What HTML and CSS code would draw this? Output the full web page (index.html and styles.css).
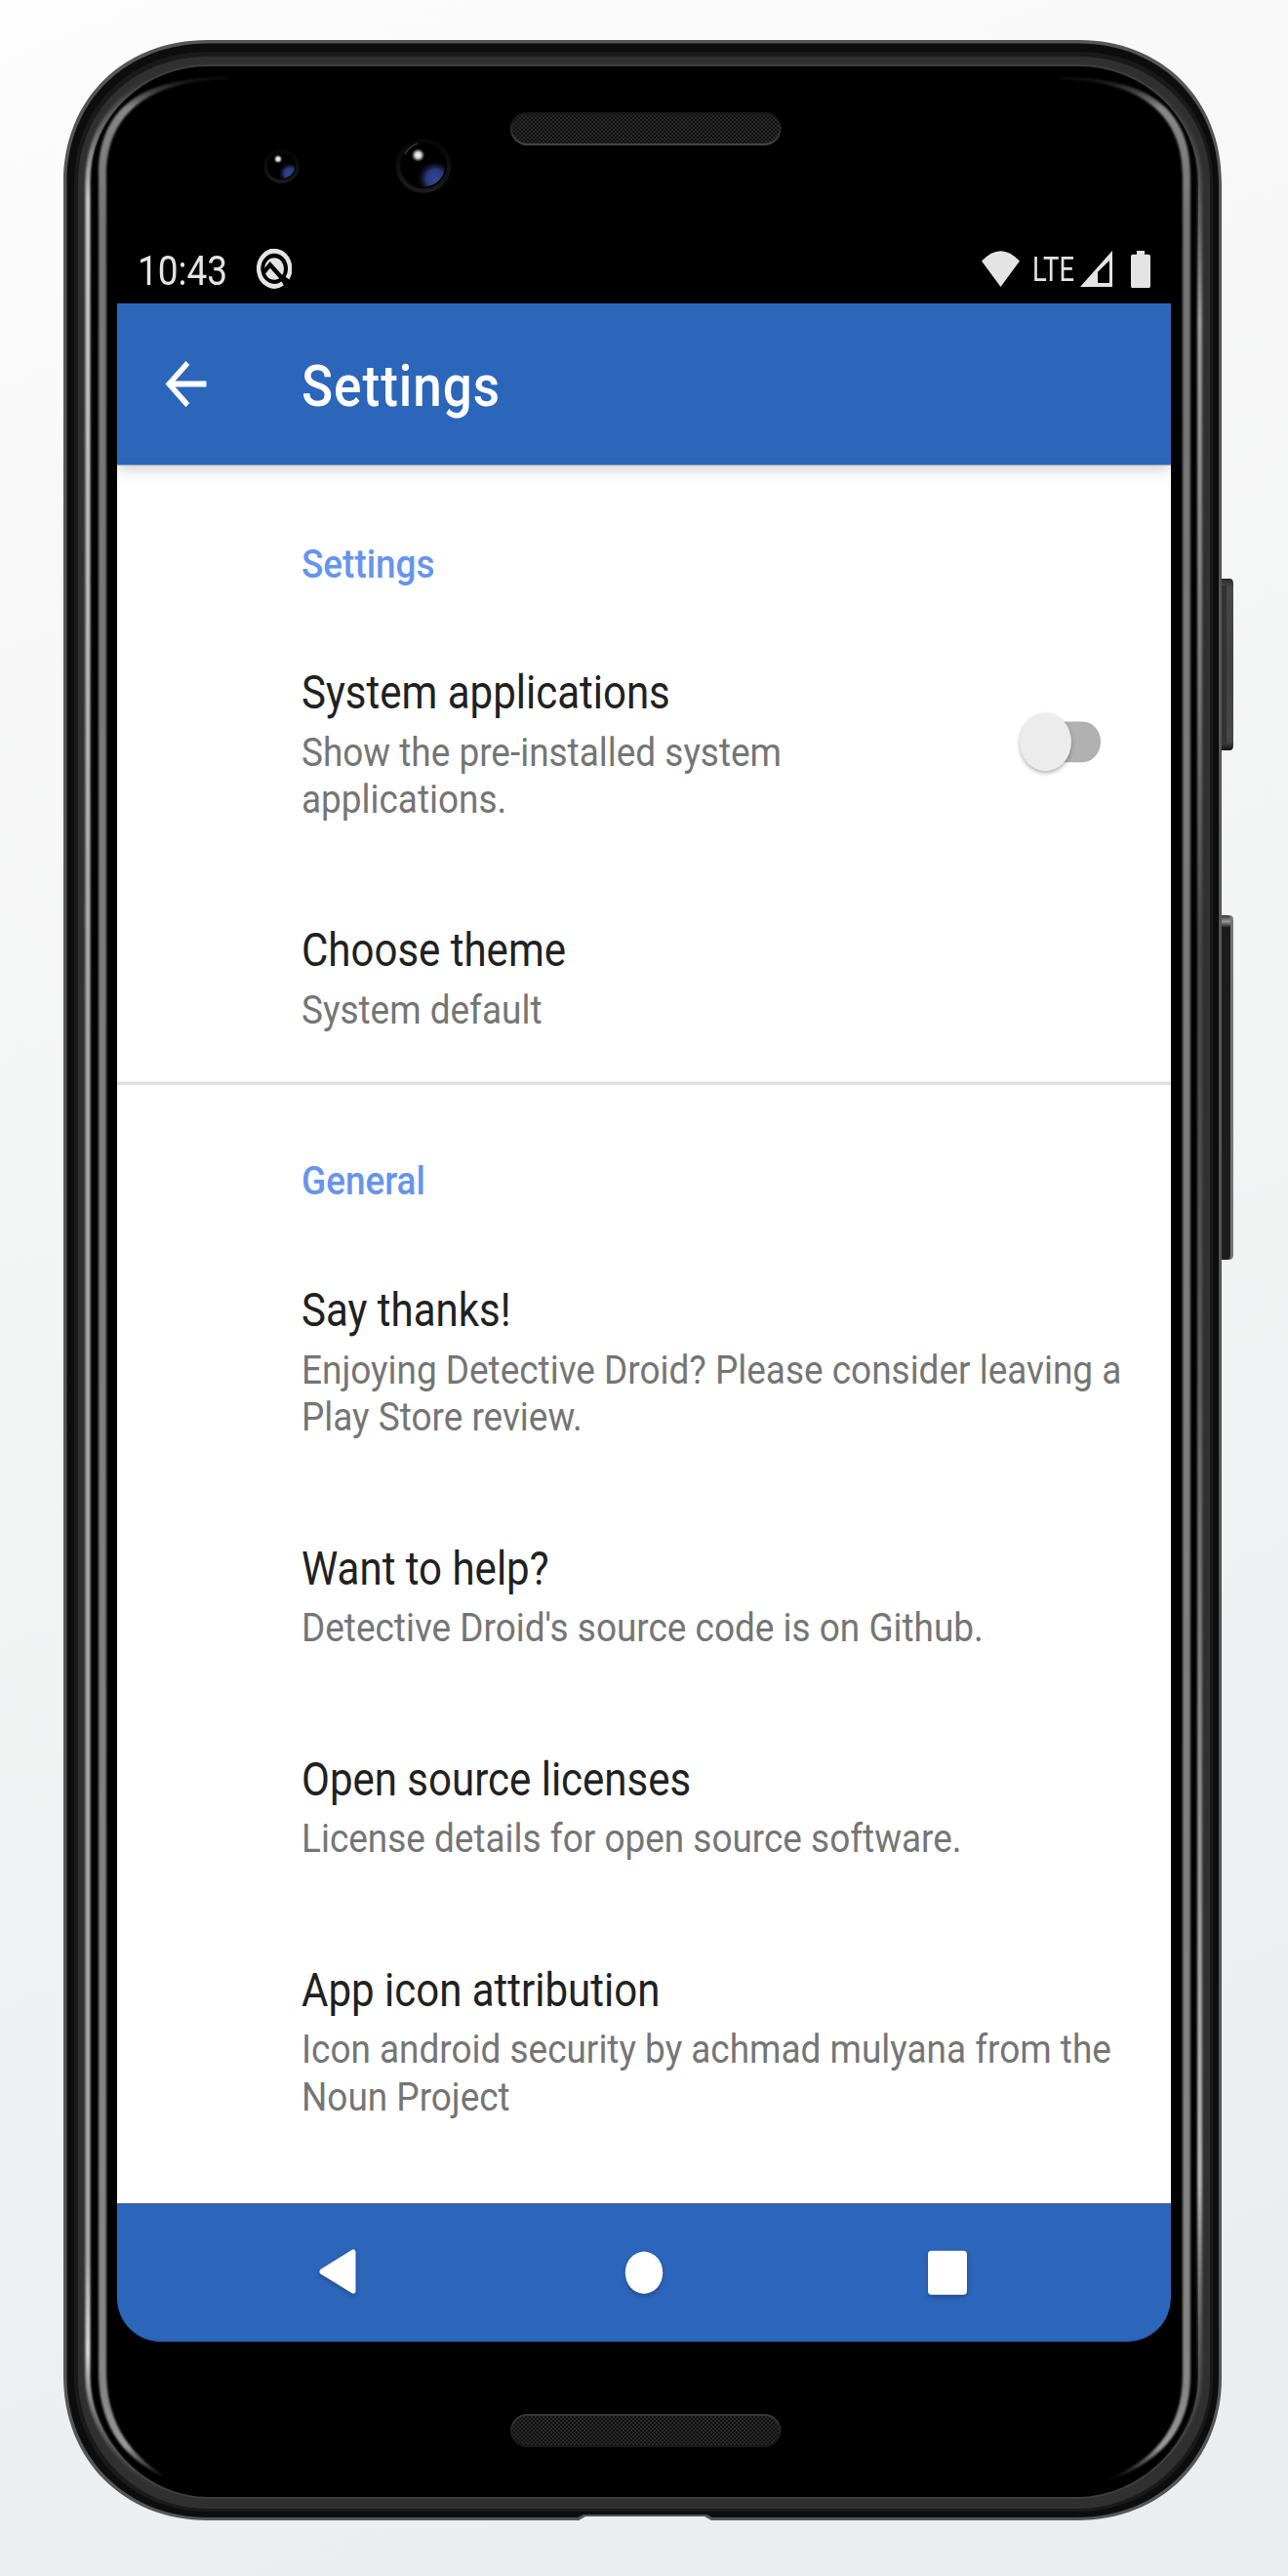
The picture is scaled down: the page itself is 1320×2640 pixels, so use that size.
FILE: index.html
```html
<!DOCTYPE html>
<html lang="en">
<head>
<meta charset="utf-8">
<title>Settings</title>
<link rel="stylesheet" href="styles.css">
</head>
<body>
<main class="stage">
  <svg class="device" viewBox="0 0 1320 2640" aria-hidden="true">
    <defs>
      <linearGradient id="edgeLeft" x1="0" x2="0" y1="80" y2="2560" gradientUnits="userSpaceOnUse">
        <stop offset="0" stop-color="#aaa" stop-opacity="0"/>
        <stop offset=".05" stop-color="#ccc"/>
        <stop offset=".4" stop-color="#aaa"/>
        <stop offset=".9" stop-color="#aaa"/>
        <stop offset=".94" stop-color="#ddd"/>
        <stop offset="1" stop-color="#555" stop-opacity="0"/>
      </linearGradient>
      <linearGradient id="edgeRight" x1="0" x2="0" y1="80" y2="2560" gradientUnits="userSpaceOnUse">
        <stop offset="0" stop-color="#555" stop-opacity="0"/>
        <stop offset=".1" stop-color="#999"/>
        <stop offset=".25" stop-color="#777"/>
        <stop offset=".36" stop-color="#454743"/>
        <stop offset=".5" stop-color="#555"/>
        <stop offset=".87" stop-color="#b5b5b5"/>
        <stop offset="1" stop-color="#444" stop-opacity="0"/>
      </linearGradient>
      <linearGradient id="glass" x1="0" x2="0" y1="76" y2="2545" gradientUnits="userSpaceOnUse">
        <stop offset="0" stop-color="#777" stop-opacity="0"/>
        <stop offset=".014" stop-color="#888"/>
        <stop offset=".06" stop-color="#757575"/>
        <stop offset=".96" stop-color="#858585"/>
        <stop offset=".985" stop-color="#999"/>
        <stop offset="1" stop-color="#777" stop-opacity="0"/>
      </linearGradient>
      <linearGradient id="buttonGrad" x1="0" x2="0" y1="0" y2="1">
        <stop offset="0" stop-color="#2a2a2a"/>
        <stop offset=".05" stop-color="#484848"/>
        <stop offset=".5" stop-color="#3f3f3f"/>
        <stop offset=".95" stop-color="#484848"/>
        <stop offset="1" stop-color="#111"/>
      </linearGradient>
      <linearGradient id="volumeGrad" x1="0" x2="0" y1="0" y2="1">
        <stop offset="0" stop-color="#333"/>
        <stop offset=".018" stop-color="#999"/>
        <stop offset=".036" stop-color="#1b1b1b"/>
        <stop offset="1" stop-color="#1e1e1e"/>
      </linearGradient>
      <radialGradient id="glint"><stop offset="0" stop-color="#fff"/><stop offset=".45" stop-color="#ccc"/><stop offset="1" stop-color="#888" stop-opacity="0"/></radialGradient>
      <radialGradient id="blue"><stop offset="0" stop-color="#344690"/><stop offset=".5" stop-color="#2b3a7c"/><stop offset="1" stop-color="#112" stop-opacity="0"/></radialGradient>
      <linearGradient id="rim" x1="0" y1="0" x2="0" y2="1"><stop offset=".1" stop-color="#111" stop-opacity=".4"/><stop offset="1" stop-color="#1b1b1e"/></linearGradient>
      <linearGradient id="rimBottom" x1="0" y1="0" x2="0" y2="1"><stop offset=".2" stop-color="#181818"/><stop offset="1" stop-color="#444"/></linearGradient>
      <linearGradient id="rimTop" x1="0" y1="0" x2="0" y2="1"><stop offset="0" stop-color="#363636"/><stop offset=".8" stop-color="#181818"/></linearGradient>
      <pattern id="mesh" width="4" height="4" patternUnits="userSpaceOnUse">
        <rect width="4" height="4" fill="#101010"/><path d="M0 0h2v2H0zM2 2h2v2H2z" fill="#2a2a2a"/>
      </pattern>
      <filter id="soft"><feGaussianBlur stdDeviation="1.1"/></filter>
      <clipPath id="lensSmall"><ellipse cx="288.5" cy="169.500" rx="14" ry="13.500"/></clipPath>
      <clipPath id="lensLarge"><ellipse cx="434" cy="169" rx="22.500" ry="22.500"/></clipPath>
    </defs>

    <!-- power and volume keys -->
    <path d="M1248 593h12q4 0 4 5v166q0 5-4 5h-12z" fill="url(#buttonGrad)"/>
    <path d="M1250 600h7v162h-7z" fill="#333"/>
    <path d="M1248 938h12q4 0 4 5v343q0 5-4 5h-12z" fill="#777"/>
    <path d="M1248 938h10q3 0 3 5v343q0 5-3 5h-10z" fill="url(#volumeGrad)"/>

    <!-- frame, from the outer rim inwards -->
    <path d="M65 187C65 101 127 41 213 41H1106C1190 41 1252 101 1252 187V2437C1252 2521 1190 2583 1104 2583H729L722 2579H600L593 2583H213C127 2583 65 2521 65 2435Z" fill="#565656"/>
    <path d="M68.500 187C68.500 103 130 44.500 213 44.500H1106C1187 44.500 1249 103 1249 187V2437C1249 2519 1187 2580 1104 2580H730L724 2577H598L592 2580H213C130 2580 68.500 2519 68.500 2435Z" fill="#0d0d0d"/>
    <path d="M76 187C76 108 134 53 213 53H1106C1182 53 1243 108 1243 187V2437C1243 2514 1182 2574 1104 2574H213C134 2574 76 2514 76 2435Z" fill="#1a1a1a"/>
    <path d="M80 187C80 112 138 58 213 58H1106C1179 58 1240 112 1240 187V2437C1240 2510 1179 2571 1104 2571H213C138 2571 80 2510 80 2435Z" fill="#303030"/>
    <path d="M91 187C91 118 148 67 213 67H1106C1171 67 1229 118 1229 187V2437C1229 2500 1171 2560 1104 2560H213C148 2560 91 2500 91 2435Z" fill="#000" stroke="#3e3e3e" stroke-width="2"/>
    <g fill="none" filter="url(#soft)">
      <path d="M180 72C130 86 90 125 90 187V2435C90 2500 145 2552 195 2560" stroke="url(#edgeLeft)" stroke-width="5"/>
      <path d="M1140 72C1190 86 1229.500 125 1229.500 187V2437C1229.500 2500 1170 2552 1120 2560" stroke="url(#edgeRight)" stroke-width="5"/>
    </g>
    <g fill="url(#glass)" filter="url(#soft)">
      <path d="M233 79C148 79 101 108 101 180V2430C101 2478 120 2518 170 2539C128 2512 109 2478 109 2430V180C109 118 150 83 233 81Z"/>
      <path d="M1087 79C1172 79 1220 108 1220 180V2435C1220 2493 1185 2528 1130 2543C1182 2524 1212 2488 1212 2435V180C1212 118 1170 83 1087 81Z"/>
    </g>

    <!-- earpiece and bottom speaker -->
    <rect x="524" y="116" width="275.500" height="32" rx="16" fill="url(#mesh)" stroke="url(#rimBottom)" stroke-width="2"/>
    <rect x="524" y="2475" width="275.500" height="32" rx="16" fill="url(#mesh)" stroke="url(#rimTop)" stroke-width="2"/>

    <!-- front cameras -->
    <ellipse cx="288.500" cy="170.500" rx="16.500" ry="15.500" stroke="url(#rim)" stroke-width="3.500"/>
    <g clip-path="url(#lensSmall)"><circle cx="297" cy="178" r="11.500" fill="url(#blue)"/></g>
    <circle cx="285" cy="163" r="4.500" fill="url(#glint)"/>
    <ellipse cx="434" cy="170" rx="26" ry="25.500" stroke="url(#rim)" stroke-width="4.500"/>
    <g clip-path="url(#lensLarge)"><circle cx="446" cy="183" r="18.500" fill="url(#blue)"/></g>
    <circle cx="428.500" cy="159" r="7" fill="url(#glint)"/>
    <path d="M415 158q4-8 13-11" fill="none" stroke="#2a2a2a" stroke-width="2"/>
  </svg>

  <div class="screen">
    <div class="status">
      <span class="clock">10:43</span>
      <svg class="debug" viewBox="0 0 36 37">
        <path d="M26.700 31.900A16 16 0 1 1 31.500 27.200" fill="none" stroke="#e4e4e4" stroke-width="4.400"/>
        <circle cx="18" cy="18.500" r="10" fill="#e4e4e4"/>
        <path d="M7.500 21.500L13.800 14.800L28 29" fill="none" stroke="#000" stroke-width="4.200"/>
      </svg>
      <svg class="wifi" viewBox="0 0 39 33"><path d="M0 9.500Q19.500-9 39 9.500L19.500 33z"/></svg>
      <svg class="lte" viewBox="0 0 42 26"><text x="-1" y="24" textLength="43" lengthAdjust="spacingAndGlyphs">LTE</text></svg>
      <svg class="signal" viewBox="0 0 33 33"><path fill-rule="evenodd" d="M33 0V33H0zM30 9L18 19.500V29.500H30z"/></svg>
      <svg class="battery" viewBox="0 0 20 34"><path d="M6 0h8v3.500h4q2 0 2 2V32q0 2-2 2H2q-2 0-2-2V5.500q0-2 2-2h4z"/></svg>
    </div>

    <header class="appbar">
      <svg class="back" viewBox="0 0 24 24"><path d="M20 11H7.830l5.590-5.590L12 4l-8 8 8 8 1.410-1.410L7.830 13H20v-2z"/></svg>
      <h1 class="heading">Settings</h1>
    </header>

    <div class="content">
      <section class="group">
        <h2 class="category">Settings</h2>
        <div class="item">
          <div class="copy">
            <div class="title">System applications</div>
            <div class="summary">Show the pre-installed system applications.</div>
          </div>
          <div class="switch"><span class="knob"></span></div>
        </div>
        <div class="item">
          <div class="copy">
            <div class="title">Choose theme</div>
            <div class="summary">System default</div>
          </div>
        </div>
      </section>
      <section class="group divided">
        <h2 class="category">General</h2>
        <div class="item">
          <div class="copy">
            <div class="title">Say thanks!</div>
            <div class="summary">Enjoying Detective Droid? Please consider leaving a Play Store review.</div>
          </div>
        </div>
        <div class="item">
          <div class="copy">
            <div class="title">Want to help?</div>
            <div class="summary">Detective Droid's source code is on Github.</div>
          </div>
        </div>
        <div class="item">
          <div class="copy">
            <div class="title">Open source licenses</div>
            <div class="summary">License details for open source software.</div>
          </div>
        </div>
        <div class="item">
          <div class="copy">
            <div class="title">App icon attribution</div>
            <div class="summary">Icon android security by achmad mulyana from the Noun Project</div>
          </div>
        </div>
      </section>
    </div>

    <nav class="navbar">
      <svg class="nav-icon" viewBox="0 0 44 44"><path d="M37 3.500V38.500L5 21z" fill="#fff" stroke="#fff" stroke-width="5" stroke-linejoin="round"/></svg>
      <svg class="nav-icon" viewBox="0 0 44 44"><circle cx="23" cy="22" r="19.200" fill="#fff"/></svg>
      <svg class="nav-icon" viewBox="0 0 44 44"><rect x="2" y="2" width="40" height="40" rx="3.500" fill="#fff"/></svg>
    </nav>
  </div>
</main>
</body>
</html>
```
FILE: styles.css
```css
* {
  box-sizing: border-box;
}

body {
  margin: 0;
  font-family: Roboto, "Liberation Sans", sans-serif;
}

.stage {
  position: relative;
  width: 1320px;
  height: 2640px;
  padding: 240px 120px;
  overflow: hidden;
  background: linear-gradient(160deg, #fefdfe 0%, #f8f8f8 18%, #f3f4f4 45%, #eeeff0 75%, #ebecee 100%);
}

.device {
  position: absolute;
  inset: 0;
  width: 1320px;
  height: 2640px;
}

/* A 1080x1920 display stretched over the taller 1080x2160 panel. */
.screen {
  position: relative;
  display: flex;
  flex-direction: column;
  width: 1080px;
  height: 1920px;
  transform: scaleY(1.125);
  transform-origin: 0 0;
  border-radius: 0 0 45px 45px / 0 0 40px 40px;
  overflow: hidden;
}

.status {
  display: flex;
  align-items: center;
  flex: 0 0 63px;
  padding: 0 21px 0 21px;
  color: #e4e4e4;
  fill: #e4e4e4;
}

.clock {
  width: 122px;
  font-size: 37px;
  line-height: 43px;
  padding-top: 3px;
}

.debug {
  width: 36px;
  height: 37px;
}

.wifi {
  width: 39px;
  height: 33px;
  margin-left: auto;
}

.lte {
  width: 42px;
  height: 26px;
  margin: 0 6px 0 14px;
  font-size: 32px;
  font-weight: 400;
  overflow: visible;
}

.signal {
  width: 33px;
  height: 33px;
  margin-right: 19px;
}

.battery {
  width: 20px;
  height: 34px;
}

.appbar {
  position: relative;
  display: flex;
  align-items: center;
  flex: 0 0 147px;
  padding-left: 39px;
  background: #2c66ba;
  box-shadow: 0 3px 14px rgba(0, 0, 0, 0.22);
  z-index: 1;
}

.back {
  width: 63px;
  height: 63px;
  fill: #fff;
}

.heading {
  margin: 0 0 0 87px;
  padding-top: 3px;
  font-size: 53px;
  font-weight: 500;
  line-height: 62px;
  letter-spacing: 1px;
  color: #fff;
}

.content {
  flex: 1;
  background: #fff;
}

.divided {
  border-top: 3px solid #e0e0e0;
}

.category {
  margin: 0;
  padding: 68.5px 0 23px 189px;
  font-size: 36.9px;
  font-weight: 500;
  line-height: 43px;
  color: #6694ee;
}

.divided .category {
  padding-top: 66px;
  padding-bottom: 23.5px;
}

.item {
  display: flex;
  align-items: center;
  padding: 48.5px 36px 43.5px 189px;
}

.copy {
  flex: 1;
}

.title {
  margin-bottom: 8px;
  font-size: 42px;
  line-height: 49px;
  color: #212121;
}

.summary {
  font-size: 36.95px;
  line-height: 43px;
  color: #757575;
}

.switch {
  display: flex;
  align-items: center;
  width: 76px;
  height: 37px;
  margin: -4px 36px 0 174px;
  border-radius: 19px;
  background: #b1b1b1;
}

.knob {
  flex: none;
  width: 53px;
  height: 53px;
  margin-left: -7px;
  border-radius: 50%;
  background: #ececec;
  box-shadow: 0 2px 4px rgba(0, 0, 0, 0.3);
}

.navbar {
  display: flex;
  align-items: center;
  justify-content: space-between;
  flex: 0 0 126px;
  padding: 0 207px 0 205px;
  background: #2c66ba;
}

.nav-icon {
  width: 44px;
  height: 44px;
  filter: drop-shadow(0 2px 2px rgba(0, 0, 0, 0.25));
}
```
